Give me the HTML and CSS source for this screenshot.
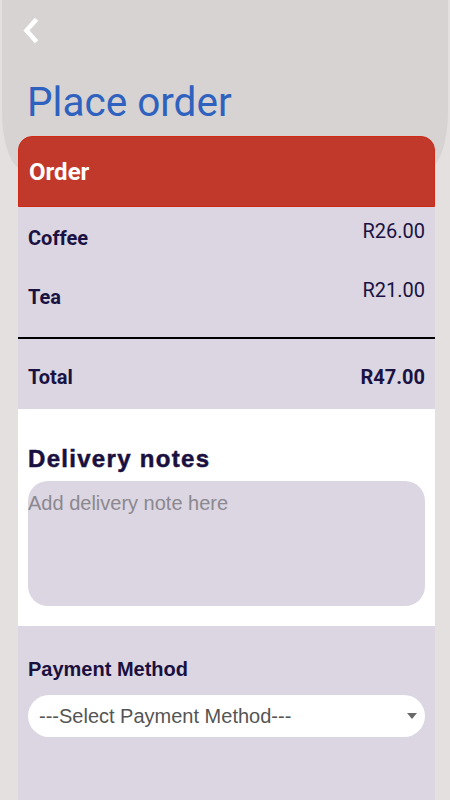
FILE: index.html
```html
<!DOCTYPE html>
<html lang="en">
<head>
<meta charset="utf-8">
<title>Place order</title>
<link rel="stylesheet" href="styles.css">
</head>
<body>
<div class="screen">
  <header class="hero">
    <button class="back" aria-label="Back">
      <svg width="22" height="30" viewBox="0 0 22 30"><path d="M15 5 L6.5 14.5 L15 24" fill="none" stroke="#fff" stroke-width="4.6" stroke-linecap="square" stroke-linejoin="miter"/></svg>
    </button>
    <h1 class="title">Place order</h1>
  </header>
  <main class="card">
    <div class="card-head">Order</div>
    <div class="items">
      <div class="row"><span class="name">Coffee</span><span class="price">R26.00</span></div>
      <div class="row"><span class="name">Tea</span><span class="price">R21.00</span></div>
    </div>
    <div class="total">
      <span class="total-label">Total</span>
      <span class="total-price">R47.00</span>
    </div>
    <section class="notes">
      <h2 class="notes-title">Delivery notes</h2>
      <textarea class="notes-input" placeholder="Add delivery note here"></textarea>
    </section>
    <section class="payment">
      <label class="pay-label" for="pay">Payment Method</label>
      <div class="select-wrap">
        <select id="pay" class="pay-select">
          <option>---Select Payment Method---</option>
          <option>Cash</option>
          <option>Card</option>
        </select>
        <svg class="caret" width="10" height="6" viewBox="0 0 10 6"><path d="M0 0 H10 L5 6 Z" fill="#6a6a6a"/></svg>
      </div>
    </section>
  </main>
</div>
</body>
</html>
```

FILE: styles.css
```css
html, body {
  margin: 0;
  padding: 0;
}
body {
  background: #e3e0df;
  width: 450px;
  height: 800px;
  overflow: hidden;
}
.screen {
  display: flex;
  flex-direction: column;
  min-height: 800px;
}
.hero {
  height: 170px;
  margin: 0 2px;
  background: #d6d3d2;
  border-radius: 0 0 22px 22px / 0 0 58px 58px;
  box-sizing: border-box;
  padding-top: 16px;
}
.back {
  display: block;
  margin: 0 0 0 18px;
  padding: 0;
  border: none;
  background: none;
  width: 22px;
  height: 30px;
}
.back svg {
  display: block;
}
.title {
  margin: 32px 0 0 25px;
  font-family: Roboto, "Liberation Sans", sans-serif;
  font-weight: 400;
  font-size: 40.5px;
  line-height: 48px;
  color: #2f61bf;
}
.card {
  position: relative;
  margin: -34px 15px 0 18px;
  flex: 1;
  display: flex;
  flex-direction: column;
}
.card-head {
  height: 71px;
  box-sizing: border-box;
  display: flex;
  align-items: center;
  padding: 0 10px;
  background: #c0392b;
  border: 1px solid #cf2a18;
  border-radius: 14px 14px 0 0;
  font-family: Roboto, "Liberation Sans", sans-serif;
  font-weight: 700;
  font-size: 24px;
  line-height: 28px;
  color: #fff;
}
.items {
  background: #dbd6e1;
  padding: 12px 10px 0;
}
.row {
  height: 59px;
  display: flex;
  justify-content: space-between;
  align-items: flex-start;
  font-family: Roboto, "Liberation Sans", sans-serif;
  font-size: 20px;
  line-height: 24px;
  color: #1a1242;
}
.name {
  font-weight: 700;
  margin-top: 7px;
}
.price {
  font-weight: 400;
}
.total {
  height: 72px;
  box-sizing: border-box;
  border-top: 2px solid #000;
  background: #dbd6e1;
  padding: 26px 10px 0;
  display: flex;
  justify-content: space-between;
  font-family: Roboto, "Liberation Sans", sans-serif;
  font-weight: 700;
  font-size: 20px;
  line-height: 24px;
  color: #1a1242;
}
.notes {
  background: #fff;
  padding: 36px 10px 20px;
  display: flex;
  flex-direction: column;
  gap: 8px;
}
.notes-title {
  margin: 0;
  font-family: "Liberation Sans", Arial, sans-serif;
  font-weight: 700;
  font-size: 24px;
  line-height: 28px;
  letter-spacing: 1.3px;
  -webkit-text-stroke: 0.5px #1a1040;
  color: #1a1040;
}
.notes-input {
  display: block;
  width: 100%;
  height: 125px;
  box-sizing: border-box;
  border: none;
  border-radius: 20px;
  background: #dbd6e1;
  padding: 11px 0 0 0;
  margin: 0;
  resize: none;
  outline: none;
  font-family: "Liberation Sans", Arial, sans-serif;
  font-size: 20px;
  color: #333;
}
.notes-input::placeholder {
  color: #8b8890;
  opacity: 1;
}
.payment {
  flex: 1;
  background: #dbd6e1;
  padding: 31px 10px 0;
  display: flex;
  flex-direction: column;
  gap: 14px;
}
.pay-label {
  display: block;
  font-family: "Liberation Sans", Arial, sans-serif;
  font-weight: 700;
  font-size: 20px;
  line-height: 24px;
  color: #1a1040;
}
.select-wrap {
  position: relative;
  height: 42px;
}
.pay-select {
  appearance: none;
  -webkit-appearance: none;
  display: block;
  width: 100%;
  height: 42px;
  box-sizing: border-box;
  border: none;
  border-radius: 21px;
  background: #fff;
  padding: 0 30px 0 11px;
  margin: 0;
  outline: none;
  font-family: "Liberation Sans", Arial, sans-serif;
  font-size: 20px;
  color: #555;
}
.caret {
  position: absolute;
  right: 8px;
  top: 18px;
  pointer-events: none;
}
```
